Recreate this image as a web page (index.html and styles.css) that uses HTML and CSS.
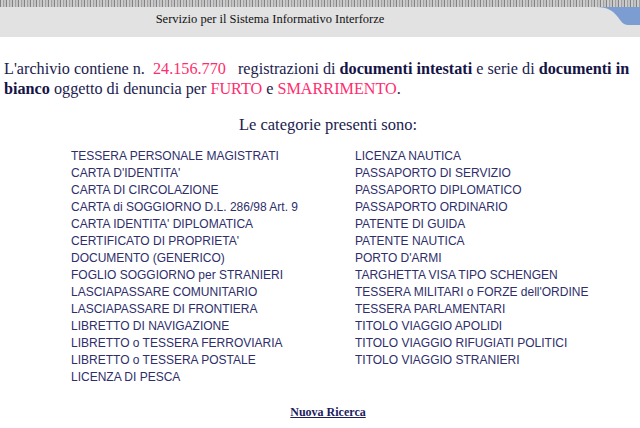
FILE: index.html
```html
<!DOCTYPE html>
<html lang="it">
<head>
    <meta charset="UTF-8">
    <title>Servizio per il Sistema Informativo Interforze</title>
    <link rel="stylesheet" href="styles.css">
</head>
<body>
    <div class="header">
        <div class="header-strip"></div>
        <div class="header-bar">
            <span class="header-title">Servizio per il Sistema Informativo Interforze</span>
        </div>
        <svg class="header-corner" width="44" height="18" viewBox="0 0 44 18">
            <path d="M0 0 L44 0 L44 18 L32 18 C27 18 25 14 21 9 C17 4 12 0 0 0 Z" fill="#7b9dd1"/>
        </svg>
    </div>

    <p class="intro">
        L'archivio contiene n.&nbsp; <span class="red">24.156.770</span> &nbsp; registrazioni di <b>documenti intestati</b> e serie di <b>documenti in</b> <b>bianco</b> oggetto di denuncia per <span class="red">FURTO</span> e <span class="red">SMARRIMENTO</span>.
    </p>

    <p class="subtitle">Le categorie presenti sono:</p>

    <div class="categories">
        <ul class="col">
            <li>TESSERA PERSONALE MAGISTRATI</li>
            <li>CARTA D'IDENTITA'</li>
            <li>CARTA DI CIRCOLAZIONE</li>
            <li>CARTA di SOGGIORNO D.L. 286/98 Art. 9</li>
            <li>CARTA IDENTITA' DIPLOMATICA</li>
            <li>CERTIFICATO DI PROPRIETA'</li>
            <li>DOCUMENTO (GENERICO)</li>
            <li>FOGLIO SOGGIORNO per STRANIERI</li>
            <li>LASCIAPASSARE COMUNITARIO</li>
            <li>LASCIAPASSARE DI FRONTIERA</li>
            <li>LIBRETTO DI NAVIGAZIONE</li>
            <li>LIBRETTO o TESSERA FERROVIARIA</li>
            <li>LIBRETTO o TESSERA POSTALE</li>
            <li>LICENZA DI PESCA</li>
        </ul>
        <ul class="col">
            <li>LICENZA NAUTICA</li>
            <li>PASSAPORTO DI SERVIZIO</li>
            <li>PASSAPORTO DIPLOMATICO</li>
            <li>PASSAPORTO ORDINARIO</li>
            <li>PATENTE DI GUIDA</li>
            <li>PATENTE NAUTICA</li>
            <li>PORTO D'ARMI</li>
            <li>TARGHETTA VISA TIPO SCHENGEN</li>
            <li>TESSERA MILITARI o FORZE dell'ORDINE</li>
            <li>TESSERA PARLAMENTARI</li>
            <li>TITOLO VIAGGIO APOLIDI</li>
            <li>TITOLO VIAGGIO RIFUGIATI POLITICI</li>
            <li>TITOLO VIAGGIO STRANIERI</li>
        </ul>
    </div>

    <p class="footer"><a href="#">Nuova Ricerca</a></p>
</body>
</html>
```

FILE: styles.css
```css
body {
    margin: 0;
    font-family: "Liberation Serif", "Times New Roman", serif;
    color: #1c1c4e;
    background-color: #fff;
}
.header {
    position: relative;
    background-color: #e2e2e2;
    height: 37px;
}
.header-strip {
    height: 7px;
    background-color: #d8d8d8;
    background-image:
        repeating-linear-gradient(90deg, #9a9a9a 0 1px, #f2f2f2 1px 3px, #bdbdbd 3px 4px, #e6e6e6 4px 6px),
        repeating-linear-gradient(0deg, rgba(255, 255, 255, 0.5) 0 1px, transparent 1px 2px);
    background-blend-mode: multiply;
}
.header-bar {
    display: flex;
    height: 30px;
}
.header-title {
    flex: 1;
    text-align: center;
    padding: 5px 100px 0 0;
    font-size: 12.5px;
    color: #111;
}
/* blue tab sitting on the top right corner of the bar */
.header-corner {
    position: absolute;
    top: 7px;
    right: 0;
    display: block;
}
.intro {
    margin: 22px 4px 0 4px;
    font-size: 16.2px;
    line-height: 20px;
}
.intro b {
    color: #141445;
}
.red {
    color: #ff2d6e;
}
.subtitle {
    margin: 16px 0 0 0;
    text-align: center;
    padding-left: 16px;
    font-size: 16.5px;
}
.categories {
    display: flex;
    margin: 13px 0 0 71px;
}
.col {
    list-style: none;
    margin: 0;
    padding: 0;
    font-family: "Liberation Sans", Arial, sans-serif;
    font-size: 12px;
    line-height: 17px;
    color: #2e2e6a;
}
.col:first-child {
    width: 284px;
}
.footer {
    margin: 19px 0 0 0;
    text-align: center;
    padding-left: 16px;
    font-size: 12px;
    font-weight: bold;
}
.footer a {
    color: #1c1c5e;
}
```
